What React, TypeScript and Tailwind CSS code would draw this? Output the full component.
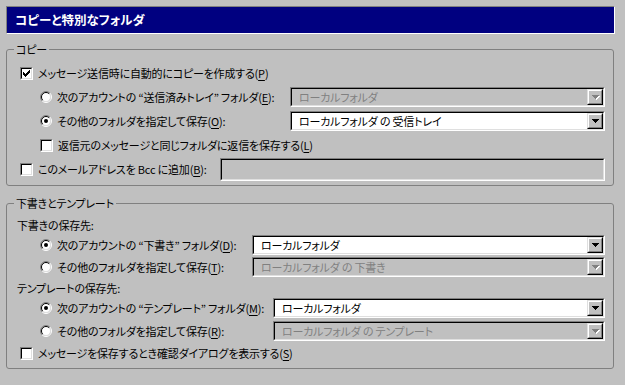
import React from "react";

const FONT = "font-['Noto_Sans_CJK_JP','Noto_Sans_CJK_SC',sans-serif] [font-feature-settings:'palt']";

function Mn({ children }: { children: React.ReactNode }) {
  return <span className="underline underline-offset-[2px]">{children}</span>;
}

function Check({ checked = false }: { checked?: boolean }) {
  return (
    <div className="w-[13px] h-[13px] shrink-0 border border-t-[#808080] border-l-[#808080] border-b-white border-r-white">
      <div className="w-full h-full border border-t-black border-l-black border-b-[#dfdfdf] border-r-[#dfdfdf] bg-white">
        {checked && (
          <svg width="7" height="7" viewBox="0 0 7 7" className="m-[1px]" shapeRendering="crispEdges">
            <rect x="6" y="0" width="1" height="1" />
            <rect x="5" y="1" width="2" height="1" />
            <rect x="0" y="2" width="1" height="1" />
            <rect x="4" y="2" width="3" height="1" />
            <rect x="0" y="3" width="2" height="1" />
            <rect x="3" y="3" width="3" height="1" />
            <rect x="0" y="4" width="5" height="1" />
            <rect x="1" y="5" width="3" height="1" />
            <rect x="2" y="6" width="1" height="1" />
          </svg>
        )}
      </div>
    </div>
  );
}

function Radio({ checked = false }: { checked?: boolean }) {
  return (
    <svg width="12" height="12" viewBox="0 0 12 12" className="shrink-0">
      <circle cx="6" cy="6" r="4.5" fill="white" />
      <path d="M2.1 9.9 A5.5 5.5 0 0 1 9.9 2.1" fill="none" stroke="#808080" />
      <path d="M9.9 2.1 A5.5 5.5 0 0 1 2.1 9.9" fill="none" stroke="white" />
      <path d="M2.8 9.2 A4.5 4.5 0 0 1 9.2 2.8" fill="none" stroke="black" />
      <path d="M9.2 2.8 A4.5 4.5 0 0 1 2.8 9.2" fill="none" stroke="#dfdfdf" />
      {checked && <circle cx="6" cy="6" r="2" fill="black" />}
    </svg>
  );
}

function Arrow({ disabled }: { disabled?: boolean }) {
  const rows = [
    [0, 0, 7],
    [1, 1, 5],
    [2, 2, 3],
    [3, 3, 1],
  ];
  return (
    <svg width="8" height="5" viewBox="0 0 8 5" shapeRendering="crispEdges">
      {disabled &&
        rows.map(([x, y, w]) => (
          <rect key={"s" + y} x={x + 1} y={y + 1} width={w} height="1" fill="white" />
        ))}
      {rows.map(([x, y, w]) => (
        <rect key={y} x={x} y={y} width={w} height="1" fill={disabled ? "#808080" : "black"} />
      ))}
    </svg>
  );
}

function Sunken({ className = "", children }: { className?: string; children?: React.ReactNode }) {
  return (
    <div className={"shrink-0 border border-t-[#808080] border-l-[#808080] border-b-white border-r-white " + className}>
      <div className="w-full h-full flex items-center border border-t-black border-l-black border-b-[#dfdfdf] border-r-[#dfdfdf]">
        {children}
      </div>
    </div>
  );
}

function Combo({ text, disabled, className }: { text: string; disabled?: boolean; className: string }) {
  return (
    <Sunken className={"h-[20px] " + className}>
      <div className={"flex-1 h-full flex items-center pl-[7px] whitespace-nowrap " + (disabled ? "bg-[#c0c0c0] text-[#808080]" : "bg-white text-black")}>
        {text}
      </div>
      <div className="w-[16px] h-full bg-[#c0c0c0] border border-t-[#dfdfdf] border-l-[#dfdfdf] border-b-black border-r-black">
        <div className="w-full h-full flex items-center justify-center pl-[1px] pt-[1px] border border-t-white border-l-white border-b-[#808080] border-r-[#808080]">
          <Arrow disabled={disabled} />
        </div>
      </div>
    </Sunken>
  );
}

function Group({ title, className, children }: { title: string; className?: string; children: React.ReactNode }) {
  return (
    <fieldset className={"w-[608px] border border-[#808080] rounded-[3px] " + (className ?? "")}>
      <legend className="ml-[7px] px-[2px] leading-[16px]">{title}</legend>
      {children}
    </fieldset>
  );
}

function Label({ children }: { children: React.ReactNode }) {
  return <span className="ml-[5px] flex-1 min-w-0 whitespace-nowrap">{children}</span>;
}

export default function App() {
  return (
    <div className={"w-[625px] h-[385px] bg-[#c0c0c0] p-[6px] text-[11px] tracking-[-0.2px] leading-[16px] text-black " + FONT}>
      <div className="w-[609px] h-[28px] bg-[#000080] border border-t-[#808080] border-l-[#808080] border-b-white border-r-white flex items-center pl-[8px]">
        <span className="text-white font-bold text-[12.5px] tracking-normal">コピーと特別なフォルダ</span>
      </div>

      <Group title="コピー" className="mt-[7px]">
        <div className="pl-[13px] pr-[8px] pt-[4px] pb-[4px]">
          <div className="flex items-center h-[24px]">
            <Check checked />
            <Label>
              メッセージ送信時に自動的にコピーを作成する(<Mn>P</Mn>)
            </Label>
          </div>
          <div className="flex items-center h-[24px] pl-[20px]">
            <Radio />
            <Label>
              次のアカウントの “送信済みトレイ” フォルダ(<Mn>E</Mn>):
            </Label>
            <Combo text="ローカルフォルダ" disabled className="w-[315px]" />
          </div>
          <div className="flex items-center h-[24px] pl-[20px]">
            <Radio checked />
            <Label>
              その他のフォルダを指定して保存(<Mn>O</Mn>):
            </Label>
            <Combo text="ローカルフォルダ の 受信トレイ" className="w-[315px]" />
          </div>
          <div className="flex items-center h-[24px] pl-[20px]">
            <Check />
            <Label>
              返信元のメッセージと同じフォルダに返信を保存する(<Mn>L</Mn>)
            </Label>
          </div>
          <div className="flex items-center h-[24px]">
            <Check />
            <Label>
              このメールアドレスを Bcc に追加(<Mn>B</Mn>):
            </Label>
            <Sunken className="w-[385px] h-[23px]">
              <div className="w-full h-full bg-[#c0c0c0]" />
            </Sunken>
          </div>
        </div>
      </Group>

      <Group title="下書きとテンプレート" className="mt-[9px]">
        <div className="pl-[13px] pr-[8px] pt-[4px] pb-[5px]">
          <div className="flex items-center h-[20px] ml-[-3px]">下書きの保存先:</div>
          <div className="flex items-center h-[20px] pl-[20px]">
            <Radio checked />
            <Label>
              次のアカウントの “下書き” フォルダ(<Mn>D</Mn>):
            </Label>
            <Combo text="ローカルフォルダ" className="w-[353px]" />
          </div>
          <div className="flex items-center h-[24px] pl-[20px]">
            <Radio />
            <Label>
              その他のフォルダを指定して保存(<Mn>T</Mn>):
            </Label>
            <Combo text="ローカルフォルダ の 下書き" disabled className="w-[353px]" />
          </div>
          <div className="flex items-center h-[18px] ml-[-3px]">テンプレートの保存先:</div>
          <div className="flex items-center h-[22px] pl-[20px]">
            <Radio checked />
            <Label>
              次のアカウントの “テンプレート” フォルダ(<Mn>M</Mn>):
            </Label>
            <Combo text="ローカルフォルダ" className="w-[332px]" />
          </div>
          <div className="flex items-center h-[24px] pl-[20px]">
            <Radio />
            <Label>
              その他のフォルダを指定して保存(<Mn>R</Mn>):
            </Label>
            <Combo text="ローカルフォルダ の テンプレート" disabled className="w-[332px]" />
          </div>
          <div className="flex items-center h-[20px]">
            <Check />
            <Label>
              メッセージを保存するとき確認ダイアログを表示する(<Mn>S</Mn>)
            </Label>
          </div>
        </div>
      </Group>
    </div>
  );
}
